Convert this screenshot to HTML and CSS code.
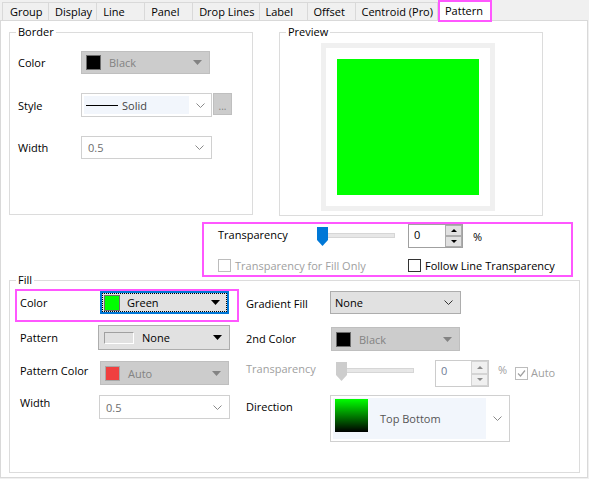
FILE: index.html
```html
<!DOCTYPE html>
<html lang="en">
<head>
  <meta charset="UTF-8">
  <meta name="viewport" content="width=device-width, initial-scale=1.0">
  <title>Pattern</title>
  <link rel="stylesheet" href="styles.css">
</head>
<body>
  <!-- Tab strip -->
  <div class="tabs">
    <div class="tab">Group</div>
    <div class="tab">Display</div>
    <div class="tab">Line</div>
    <div class="tab">Panel</div>
    <div class="tab">Drop Lines</div>
    <div class="tab">Label</div>
    <div class="tab">Offset</div>
    <div class="tab">Centroid (Pro)</div>
    <div class="tab active">Pattern</div>
  </div>

  <div class="panel">
    <div class="top">
      <!-- Border -->
      <fieldset class="group border-group">
        <legend>Border</legend>
        <div class="field first">
          <span class="lbl">Color</span>
          <div class="combo disabled c-bcolor">
            <span class="sw black"></span><span class="txt">Black</span>
            <svg class="tri" width="9" height="5"><polygon points="0,0 9,0 4.5,5"/></svg>
          </div>
        </div>
        <div class="field">
          <span class="lbl">Style</span>
          <div class="combo edit c-style">
            <div class="inner"><span class="line"></span><span class="txt">Solid</span></div>
            <svg class="chev" width="9" height="5"><polyline points="0.5,0.5 4.5,4.5 8.5,0.5"/></svg>
          </div>
          <div class="dots">...</div>
        </div>
        <div class="field">
          <span class="lbl">Width</span>
          <div class="combo edit c-width">
            <span class="txt">0.5</span>
            <svg class="chev" width="9" height="5"><polyline points="0.5,0.5 4.5,4.5 8.5,0.5"/></svg>
          </div>
        </div>
      </fieldset>

      <!-- Preview -->
      <fieldset class="group preview-group">
        <legend>Preview</legend>
        <div class="preview"><div class="fill-box"></div></div>
      </fieldset>
    </div>

    <!-- Transparency -->
    <div class="transp">
      <div class="trow">
        <span class="lbl t-lbl">Transparency</span>
        <div class="slider">
          <svg class="thumb" width="11" height="19"><polygon points="0,0 11,0 11,13 5.5,19 0,13"/></svg>
          <span class="track"></span>
        </div>
        <div class="spin t-spin">
          <span class="val">0</span>
          <div class="sbtns">
            <span class="sb"><svg width="6" height="3"><polygon points="0,3 6,3 3,0"/></svg></span>
            <span class="sb"><svg width="6" height="3"><polygon points="0,0 6,0 3,3"/></svg></span>
          </div>
        </div>
        <span class="pct">%</span>
      </div>
      <div class="trow2">
        <label class="chk first dim"><span class="cb off"></span>Transparency for Fill Only</label>
        <label class="chk"><span class="cb"></span>Follow Line Transparency</label>
      </div>
    </div>

    <!-- Fill -->
    <fieldset class="group fill-group">
      <legend>Fill</legend>
      <div class="fill-grid">
        <div class="row hl">
          <span class="lbl">Color</span>
          <div class="combo btn focus c-green">
            <span class="sw green"></span><span class="txt">Green</span>
            <svg class="tri" width="9" height="5"><polygon points="0,0 9,0 4.5,5"/></svg>
          </div>
        </div>
        <div class="row r1">
          <span class="lbl rl">Gradient Fill</span>
          <div class="combo btn c-grad">
            <span class="txt">None</span>
            <svg class="chev dark" width="9" height="5"><polyline points="0.5,0.5 4.5,4.5 8.5,0.5"/></svg>
          </div>
        </div>

        <div class="row l2">
          <span class="lbl">Pattern</span>
          <div class="combo btn c-pat">
            <span class="empty"></span><span class="txt">None</span>
            <svg class="tri" width="9" height="5"><polygon points="0,0 9,0 4.5,5"/></svg>
          </div>
        </div>
        <div class="row r2">
          <span class="lbl rl">2nd Color</span>
          <div class="combo disabled c-2nd">
            <span class="sw black"></span><span class="txt">Black</span>
            <svg class="tri" width="9" height="5"><polygon points="0,0 9,0 4.5,5"/></svg>
          </div>
        </div>

        <div class="row l3">
          <span class="lbl">Pattern Color</span>
          <div class="combo disabled c-pcol">
            <span class="sw red"></span><span class="txt">Auto</span>
            <svg class="tri" width="9" height="5"><polygon points="0,0 9,0 4.5,5"/></svg>
          </div>
        </div>
        <div class="row r3">
          <span class="lbl rl dim">Transparency</span>
          <div class="slider off f-slider">
            <svg class="thumb" width="11" height="19"><polygon points="0,0 11,0 11,13 5.5,19 0,13"/></svg>
            <span class="track"></span>
          </div>
          <div class="spin off f-spin">
            <span class="val">0</span>
            <div class="sbtns">
              <span class="sb"><svg width="6" height="3"><polygon points="0,3 6,3 3,0"/></svg></span>
              <span class="sb"><svg width="6" height="3"><polygon points="0,0 6,0 3,3"/></svg></span>
            </div>
          </div>
          <span class="pct dim f-pct">%</span>
          <label class="chk dim f-auto">
            <span class="cb off"><svg width="11" height="11"><polyline points="2,5.5 4.5,8 9,2.5"/></svg></span>Auto
          </label>
        </div>

        <div class="row l4">
          <span class="lbl up">Width</span>
          <div class="combo edit c-fw">
            <span class="txt">0.5</span>
            <svg class="chev" width="9" height="5"><polyline points="0.5,0.5 4.5,4.5 8.5,0.5"/></svg>
          </div>
        </div>
        <div class="row r4">
          <span class="lbl rl up2">Direction</span>
          <div class="combo edit c-dir">
            <div class="inner"><span class="grad"></span><span class="txt">Top Bottom</span></div>
            <svg class="chev" width="9" height="5"><polyline points="0.5,0.5 4.5,4.5 8.5,0.5"/></svg>
          </div>
        </div>
      </div>
    </fieldset>
  </div>
</body>
</html>
```

FILE: styles.css
```css
body {
  margin: 0;
  background-color: #f0f0f0;
  font-family: "Open Sans", "Noto Sans", sans-serif;
  font-size: 11px;
  color: #000;
}

/* tabs */
.tabs {
  display: flex;
  align-items: flex-end;
  height: 20px;
  padding-left: 2px;
}
.tab {
  box-sizing: border-box;
  height: 18px;
  min-width: 48px;
  padding: 0 4px 0 6px;
  border-top: 1px solid #d9d9d9;
  border-right: 1px solid #d9d9d9;
  line-height: 17px;
  white-space: nowrap;
}
.tab:first-child {
  min-width: 47px;
  padding-left: 7px;
  border-left: 1px solid #d9d9d9;
}
.tab.active {
  position: relative;
  z-index: 1;
  height: 22px;
  margin-bottom: -2px;
  padding: 0 7px 0 5px;
  border: 2px solid #ff57ff;
  background-color: #fff;
  line-height: 17px;
}

.panel {
  box-sizing: border-box;
  width: 588px;
  height: 458px;
  background-color: #fff;
  border: 1px solid #d9d9d9;
}

/* group boxes */
.group {
  box-sizing: border-box;
  margin: 0;
  padding: 0;
  border: 1px solid #dcdcdc;
  min-width: 0;
}
.group legend {
  margin-left: 6px;
  padding: 0 2px;
  line-height: 14px;
}

.top {
  display: flex;
  align-items: flex-start;
  padding: 4px 0 0 8px;
}
.border-group {
  width: 244px;
  height: 190px;
}
.preview-group {
  width: 264px;
  height: 191px;
  margin-left: 26px;
}

.field {
  display: flex;
  align-items: center;
  margin-top: 19px;
  padding-left: 8px;
}
.field.first {
  margin-top: 12px;
}
.field .lbl {
  width: 63px;
}

.preview {
  box-sizing: border-box;
  width: 174px;
  height: 168px;
  margin: 4px 0 0 41px;
  padding: 11px;
  border: 5px solid #f0f0f0;
}
.fill-box {
  height: 100%;
  background-color: #00ff00;
}

/* combos */
.combo {
  box-sizing: border-box;
  display: flex;
  align-items: center;
  height: 23px;
  padding: 0 7px 0 4px;
  border: 1px solid #adadad;
  white-space: nowrap;
}
.combo .txt {
  flex: 1;
}
.combo.btn {
  background-color: #e1e1e1;
}
.combo.disabled {
  background-color: #cccccc;
  border-color: #bfbfbf;
  color: #838383;
}
.combo.disabled .tri {
  fill: #838383;
}
.combo.edit {
  background-color: #fff;
  border-color: #d0d0d0;
  color: #6d6d6d;
}
.combo.focus {
  border: 2px solid #0078d7;
  outline: 1px dotted #000;
  outline-offset: -3px;
  padding-left: 2px;
}
.tri {
  fill: #000;
}
.chev {
  fill: none;
  stroke: #8a8a8a;
  stroke-width: 1;
}
.chev.dark {
  stroke: #333;
}

.sw {
  box-sizing: border-box;
  width: 15px;
  height: 15px;
  margin-right: 8px;
  border: 1px solid #6d6d6d;
}
.sw.black {
  background-color: #000;
}
.sw.green {
  width: 16px;
  height: 16px;
  margin-right: 7px;
  background-color: #00ff00;
}
.sw.red {
  background-color: #f04040;
  border-color: #a8a8a8;
}
.empty {
  box-sizing: border-box;
  width: 30px;
  height: 12px;
  margin: 0 8px 0 1px;
  border: 1px solid #fff;
  border-top-color: #a0a0a0;
  border-left-color: #a0a0a0;
}

.c-bcolor {
  width: 129px;
}
.c-style {
  width: 131px;
  height: 24px;
  padding: 2px 6px 2px 2px;
  align-items: stretch;
}
.c-style .inner {
  display: flex;
  align-items: center;
  width: 107px;
  margin-right: 7px;
  background-color: #f2f6fc;
  color: #444;
}
.c-style .chev {
  align-self: center;
}
.line {
  width: 32px;
  height: 1px;
  margin: 0 4px 0 2px;
  background-color: #000;
}
.dots {
  box-sizing: border-box;
  align-self: flex-start;
  width: 19px;
  height: 22px;
  margin-left: 1px;
  border: 1px solid #bfbfbf;
  background-color: #cccccc;
  color: #838383;
  font-size: 10px;
  line-height: 24px;
  text-align: center;
}
.c-width {
  width: 131px;
  padding-left: 6px;
}

/* transparency box */
.transp {
  box-sizing: border-box;
  width: 371px;
  height: 55px;
  margin: 6px 0 0 201px;
  border: 2px solid #ff57ff;
}
.trow {
  display: flex;
  align-items: center;
  height: 24px;
  padding-left: 14px;
}
.t-lbl {
  width: 99px;
  margin-top: -3px;
}
.slider {
  display: flex;
  align-items: flex-start;
  width: 78px;
  height: 19px;
}
.thumb {
  fill: #0078d7;
  flex: none;
}
.track {
  flex: 1;
  height: 3px;
  margin-top: 6px;
  background-color: #e7e7e7;
  border: 1px solid #d6d6d6;
  border-left: none;
}
.slider.off .thumb {
  fill: #cdcdcd;
}
.spin {
  box-sizing: border-box;
  display: flex;
  width: 55px;
  height: 24px;
  border: 1px solid #a0a0a0;
  background-color: #fff;
}
.t-spin {
  margin-left: 13px;
}
.spin .val {
  flex: 1;
  padding: 2px 0 0 5px;
}
.sbtns {
  display: flex;
  flex-direction: column;
  width: 17px;
}
.sb {
  box-sizing: border-box;
  flex: 1;
  display: flex;
  align-items: center;
  justify-content: center;
  border: 1px solid #adadad;
  background-color: #e1e1e1;
  fill: #000;
}
.spin.off {
  border-color: #cccccc;
}
.spin.off .val {
  color: #6f7d96;
}
.spin.off .sb {
  border-color: #d4d4d4;
  background-color: #f0f0f0;
  fill: #8a8a8a;
}
.pct {
  margin-left: 10px;
}
.trow2 {
  display: flex;
  margin-top: 10px;
  padding-left: 14px;
}
.chk {
  display: flex;
  align-items: center;
  gap: 4px;
  white-space: nowrap;
}
.chk.first {
  width: 190px;
}
.cb {
  box-sizing: border-box;
  display: flex;
  align-items: center;
  justify-content: center;
  width: 13px;
  height: 13px;
  border: 1px solid #333;
  background-color: #fff;
}
.cb.off {
  border-color: #bcbcbc;
}
.cb svg {
  fill: none;
  stroke: #a0a0a0;
  stroke-width: 1.2;
}
.dim {
  color: #a0a0a0;
}

/* fill */
.fill-group {
  width: 571px;
  height: 200px;
  margin: -4px 0 0 8px;
}
.fill-grid {
  display: grid;
  grid-template-columns: 224px 1fr;
  grid-template-rows: 36px 35px 35px 47px;
  column-gap: 7px;
  padding: 2px 0 0 5px;
}
.row {
  display: flex;
  align-items: flex-start;
  padding-left: 5px;
}
.row .lbl {
  width: 80px;
  white-space: nowrap;
}
.row .rl {
  width: 84px;
}
.row.r1, .row.r2, .row.r3, .row.r4 {
  padding-left: 0;
}
.hl {
  box-sizing: border-box;
  height: 33px;
  padding-left: 3px;
  border: 2px solid #ff57ff;
}
.hl .lbl {
  line-height: 23px;
}
.c-green {
  width: 129px;
}
.r1 .lbl {
  margin-top: 3px;
  line-height: 23px;
}
.c-grad {
  width: 131px;
  margin-top: 2px;
  padding-left: 4px;
}
.l2 .lbl {
  line-height: 25px;
}
.c-pat {
  width: 132px;
  height: 25px;
  margin-left: -2px;
}
.r2 .lbl {
  margin-top: 2px;
  line-height: 24px;
}
.c-2nd {
  width: 129px;
  height: 24px;
  margin: 2px 0 0 1px;
}
.l3 .lbl {
  line-height: 22px;
}
.c-pcol {
  width: 129px;
  height: 24px;
  margin-top: 1px;
}
.r3 .lbl {
  line-height: 18px;
}
.f-slider {
  margin: 2px 0 0 6px;
}
.f-spin {
  width: 54px;
  height: 27px;
  margin-left: 21px;
}
.f-pct {
  width: 17px;
  margin: 0 0 0 9px;
  line-height: 20px;
}
.f-auto {
  gap: 3px;
  margin-top: 4px;
  line-height: 18px;
}
.l4 .up {
  line-height: 16px;
}
.c-fw {
  width: 131px;
  height: 24px;
  margin-left: -1px;
  padding-left: 6px;
}
.r4 .up2 {
  line-height: 24px;
}
.c-dir {
  width: 180px;
  height: 47px;
  padding: 2px 7px 2px 2px;
  align-items: stretch;
}
.c-dir .inner {
  display: flex;
  align-items: center;
  width: 156px;
  margin-right: 7px;
  padding-left: 2px;
  background-color: #f2f6fc;
  color: #555;
}
.c-dir .chev {
  align-self: center;
}
.grad {
  width: 33px;
  height: 33px;
  margin: -6px 12px 0 0;
  background: linear-gradient(#00ff00, #000);
}
```
